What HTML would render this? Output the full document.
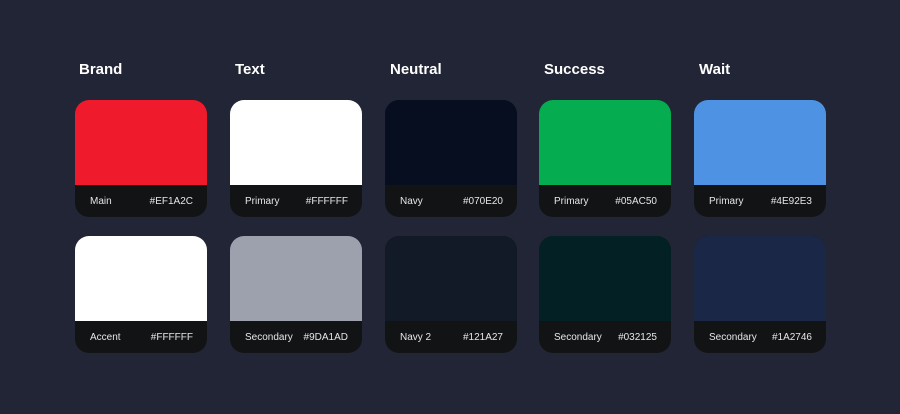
<!DOCTYPE html><html><head><style>
body{margin:0;width:900px;height:414px;background:#222535;font-family:"Liberation Sans",sans-serif;position:relative;overflow:hidden}
.t{position:absolute;top:61px;color:#fff;font-weight:bold;font-size:15px}
.c{position:absolute;width:132px;height:117px;border-radius:14px;overflow:hidden;background:#121315}
.s{height:85px}
.f{height:32px;display:flex;justify-content:space-between;align-items:center;padding:0 14px 0 15px;color:#e6e6e8;font-size:10px}
</style></head><body>
<div class="t" style="left:79px">Brand</div>
<div class="t" style="left:235px">Text</div>
<div class="t" style="left:390px">Neutral</div>
<div class="t" style="left:544px">Success</div>
<div class="t" style="left:699px">Wait</div>

<div class="c" style="left:75px;top:100px"><div class="s" style="background:#EF1A2C"></div><div class="f"><span>Main</span><span>#EF1A2C</span></div></div>
<div class="c" style="left:230px;top:100px"><div class="s" style="background:#FFFFFF"></div><div class="f"><span>Primary</span><span>#FFFFFF</span></div></div>
<div class="c" style="left:385px;top:100px"><div class="s" style="background:#070E20"></div><div class="f"><span>Navy</span><span>#070E20</span></div></div>
<div class="c" style="left:539px;top:100px"><div class="s" style="background:#05AC50"></div><div class="f"><span>Primary</span><span>#05AC50</span></div></div>
<div class="c" style="left:694px;top:100px"><div class="s" style="background:#4E92E3"></div><div class="f"><span>Primary</span><span>#4E92E3</span></div></div>

<div class="c" style="left:75px;top:236px"><div class="s" style="background:#FFFFFF"></div><div class="f"><span>Accent</span><span>#FFFFFF</span></div></div>
<div class="c" style="left:230px;top:236px"><div class="s" style="background:#9DA1AD"></div><div class="f"><span>Secondary</span><span>#9DA1AD</span></div></div>
<div class="c" style="left:385px;top:236px"><div class="s" style="background:#121A27"></div><div class="f"><span>Navy 2</span><span>#121A27</span></div></div>
<div class="c" style="left:539px;top:236px"><div class="s" style="background:#032125"></div><div class="f"><span>Secondary</span><span>#032125</span></div></div>
<div class="c" style="left:694px;top:236px"><div class="s" style="background:#1A2746"></div><div class="f"><span>Secondary</span><span>#1A2746</span></div></div>
</body></html>
